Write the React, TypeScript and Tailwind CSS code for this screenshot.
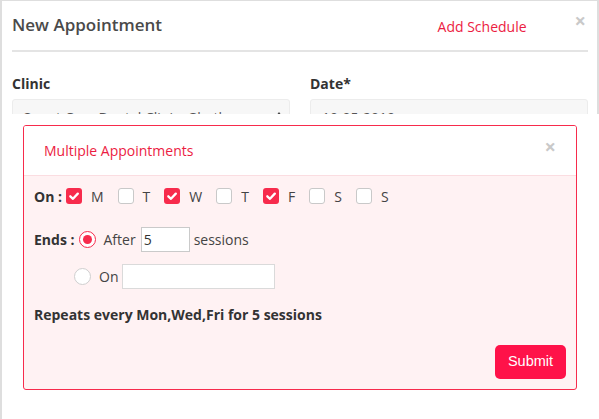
import React from "react";

const days: [string, boolean][] = [
  ["M", true],
  ["T", false],
  ["W", true],
  ["T", false],
  ["F", true],
  ["S", false],
  ["S", false],
];

const CheckBox = ({ checked }: { checked: boolean }) =>
  checked ? (
    <span className="flex h-4 w-4 shrink-0 items-center justify-center rounded-[3px] bg-[#f72b4c]">
      <svg viewBox="0 0 16 16" className="h-4 w-4">
        <path d="M4.3 8.3 L7 10.8 L11.8 5.6" fill="none" stroke="#fff" strokeWidth="2.3" strokeLinecap="round" strokeLinejoin="round" />
      </svg>
    </span>
  ) : (
    <span className="h-4 w-4 shrink-0 rounded-[3px] border border-[#c9c9c9] bg-white" />
  );

const Radio = ({ checked }: { checked: boolean }) =>
  checked ? (
    <span className="flex h-[17px] w-[17px] shrink-0 items-center justify-center rounded-full border-[1.5px] border-[#f72b4c] bg-white">
      <span className="h-[9px] w-[9px] rounded-full bg-[#f72b4c]" />
    </span>
  ) : (
    <span className="h-[17px] w-[17px] shrink-0 rounded-full border border-[#cfcfcf] bg-white" />
  );

const App = () => {
  return (
    <div className="relative h-[419px] w-[599px] overflow-hidden bg-white font-['Open_Sans',sans-serif] text-[#444]">
      <div className="h-full border-l-2 border-r-2 border-t border-[#dedede] pl-[10px] pr-[9px]">
        <div className="flex h-[51px] items-start border-b-2 border-[#e4e4e4] pt-[12px]">
          <h1 className="text-[17px] font-semibold leading-[24px] text-[#4a4a4a]">New Appointment</h1>
          <span className="ml-auto mt-[4px] text-[14px] leading-[20px] text-[#ec1c42]">Add Schedule</span>
          <span className="ml-[48px] mr-[2px] mt-[0px] text-[20px] font-bold leading-[16px] text-[#c9c9c9]">×</span>
        </div>

        <div className="mt-[22px] grid grid-cols-2 gap-5">
          <div>
            <label className="block text-[14px] font-bold leading-[20px] text-[#333]">Clinic</label>
            <div className="mt-[5px] flex h-[36px] items-center rounded-[3px] border border-[#ececec] bg-[#f7f7f7] pl-[9px] pr-[6px] text-[14px] text-[#555]">
              <span className="truncate">Quest Care Dental Clinic, Ghatkopar</span>
              <svg viewBox="0 0 8 12" className="ml-auto h-3 w-2 shrink-0">
                <path d="M4 1 L7 5 L1 5 Z M4 11 L7 7 L1 7 Z" fill="#444" />
              </svg>
            </div>
          </div>
          <div>
            <label className="block text-[14px] font-bold leading-[20px] text-[#333]">Date*</label>
            <div className="mt-[5px] flex h-[36px] items-center rounded-[3px] border border-[#ececec] bg-[#f7f7f7] pl-[11px] text-[14px] text-[#555]">
              10-05-2019
            </div>
          </div>
        </div>
      </div>

      <div className="absolute bottom-0 left-[2px] right-0 top-[114px] bg-white pl-[21px] pt-[11px]">
        <div className="flex h-[265px] w-[554px] flex-col overflow-hidden rounded-[3px] border border-[#f72b4c] bg-[#fff2f3]">
          <div className="flex h-[51px] items-center border-b border-[#fbdde1] bg-white pl-[20px] pr-[20px]">
            <span className="text-[14px] leading-[20px] text-[#ec1c42]">Multiple Appointments</span>
            <span className="ml-auto -mt-[8px] text-[20px] font-bold leading-[16px] text-[#c9c9c9]">×</span>
          </div>

          <div className="flex flex-1 flex-col px-[10px] pt-[12px] pb-[10px] text-[14px]">
            <div className="flex h-4 items-center">
              <span className="mr-[4px] font-bold text-[#333]">On :</span>
              {days.map(([d, c], i) => (
                <div key={i} className="flex items-center">
                  <CheckBox checked={c} />
                  <span className="ml-[9px] mr-[14px]">{d}</span>
                </div>
              ))}
            </div>

            <div className="mt-[23px] flex h-[25px] items-center">
              <span className="font-bold text-[#333]">Ends :</span>
              <span className="ml-[4px]">
                <Radio checked />
              </span>
              <span className="ml-[8px]">After</span>
              <span className="ml-[5px] flex h-[25px] w-[49px] items-center border border-[#cacaca] bg-white pl-[2px] text-[#333]">5</span>
              <span className="ml-[4px]">sessions</span>
            </div>

            <div className="mt-[12px] flex h-[25px] items-center pl-[40px]">
              <Radio checked={false} />
              <span className="ml-[8px]">On</span>
              <span className="ml-[4px] h-[25px] w-[153px] border border-[#dadada] bg-white" />
            </div>

            <p className="mt-[16px] font-bold leading-[20px] text-[#333]">Repeats every Mon,Wed,Fri for 5 sessions</p>

            <div className="mt-[20px] flex justify-end">
              <button className="h-[34px] w-[71px] rounded-[5px] bg-[#ff1249] font-['Liberation_Sans',Arial,sans-serif] text-[14.5px] text-white">
                Submit
              </button>
            </div>
          </div>
        </div>
      </div>
    </div>
  );
};

export default App;
